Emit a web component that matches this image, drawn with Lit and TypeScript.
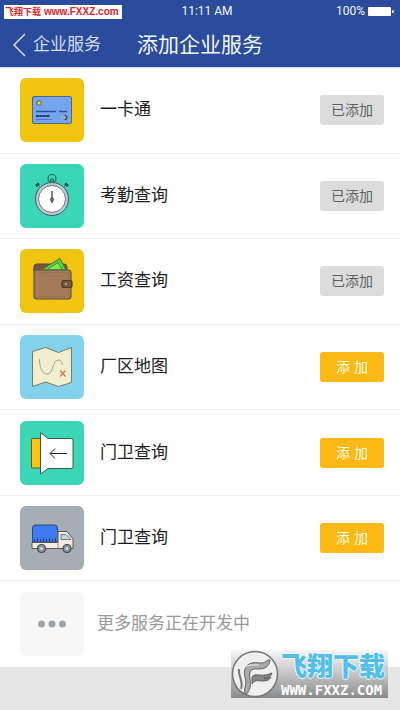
import { LitElement, html, css, svg, TemplateResult } from "lit";
import { customElement, property } from "lit/decorators.js";

interface Service {
  name: string;
  icon: string;
  added: boolean;
}

const SERVICES: Service[] = [
  { name: "一卡通", icon: "card", added: true },
  { name: "考勤查询", icon: "watch", added: true },
  { name: "工资查询", icon: "wallet", added: true },
  { name: "厂区地图", icon: "map", added: false },
  { name: "门卫查询", icon: "gate", added: false },
  { name: "门卫查询", icon: "truck", added: false },
];

const ICONS: Record<string, TemplateResult> = {
  card: svg`
    <rect x="12.5" y="18.5" width="39" height="27" rx="1.5" fill="#74a5ee" stroke="#52677c"/>
    <rect x="17" y="23" width="4" height="4" rx="1" fill="#f4d33c" stroke="#665f35"/>
    <path d="M16 33.5H36M39 33.5H47" stroke="#2b4f9e" stroke-width="1.5"/>
    <path d="M16 38H30" stroke="#22396c" stroke-width="2" stroke-dasharray="3 .4"/>
    <path d="M16 41.5H32" stroke="#4c74bd"/>
    <circle cx="42" cy="39.5" r="1" fill="#cdbf84"/>
    <path d="M44.5 37.5c3 0 3 4 0 4" stroke="#34456a" stroke-width="1.5" fill="#d9c98a"/>`,
  watch: svg`
    <circle cx="32" cy="14.5" r="4" fill="none" stroke="#25695d" stroke-width="1.2"/>
    <path d="M30.5 15h3v4h-3z" fill="#38a58f" stroke="#25695d"/>
    <path d="M16 22l3-2.500M45 19.5l3 2.500" stroke="#1d5249" stroke-width="2.5"/>
    <path d="M18 21l3 3M46 21l-3 3" stroke="#25695d"/>
    <circle cx="32" cy="35" r="16.5" fill="#bdcbd2" stroke="#46555d"/>
    <circle cx="32" cy="35" r="13.5" fill="#fff" stroke="#6b7880"/>
    <path d="M32 27v12" stroke="#333" stroke-width="1.2"/>
    <circle cx="32" cy="35.5" r="1.6" fill="#777" stroke="#333" stroke-width=".8"/>`,
  wallet: svg`
    <path d="M14 22v-4q0-3 3-3h27q3 0 3 3v5z" fill="#765640" stroke="#584632"/>
    <path d="M21 21l19-11.500 6 11.500z" fill="#5fd33c" stroke="#36782c"/>
    <path d="M28 20l10-6.500 4 6.500" fill="#7ee654" stroke="#3a8a2a"/>
    <path d="M14 19q0 2 3 2h31q3 0 3 3v23q0 3-3 3H17q-3 0-3-3z" fill="#a37b5b" stroke="#66503a" stroke-width="1.2"/>
    <path d="M17 23.5h30q1.5 0 1.5 1.5v21q0 1.5-1.5 1.5H17" fill="none" stroke="#8d6a4d" stroke-width=".7" stroke-dasharray="2 1"/>
    <rect x="42" y="31.5" width="10" height="7" rx="2" fill="#76563f" stroke="#4b3929" stroke-width="1.2"/>
    <circle cx="46" cy="35" r="1.3" fill="#b2977a"/>`,
  map: svg`
    <path d="M12.5 16.5L25.5 12.5 38.5 17.5 51.5 12.5V47.5L38.5 51.5 25.5 47 12.5 51.5z" fill="#f1efcf" stroke="#77796a"/>
    <path d="M19.5 24c0 9 3 15 7.5 15 7 0 5-14 11-14 2.500 0 4 2 4.5 5" fill="none" stroke="#a2a497"/>
    <path d="M40 35.5l5.5 6M45.5 35.5l-5.5 6" stroke="#d7705c" stroke-width="1.2"/>`,
  gate: svg`
    <rect x="11.5" y="17.5" width="12" height="29.5" rx="1" fill="#fdc60a" stroke="#5f5b2a"/>
    <path d="M20.5 11.5L28 17.5H51.5Q53 17.5 53 19V46Q53 47.5 51.5 47.5H28L20.5 53z" fill="#fff" stroke="#3a5752"/>
    <path d="M47 32.5H30.5M35 27.5l-5 5 5 5" fill="none" stroke="#222"/>`,
  truck: svg`
    <path d="M12.5 36V22q0-3 3-3h19q3 0 3 3v14z" fill="#3f7bf5" stroke="#2c4675"/>
    <path d="M14.5 36v-3M17.5 36v-4M20.5 36v-3M23.5 36v-4M26.5 36v-3M29.5 36v-4M32.5 36v-3M35.5 36v-4" stroke="#1f428f"/>
    <path d="M12 36.5H38V25.5H47L53 33V42.5H12z" fill="#f5ebe0" stroke="#5b5854"/>
    <path d="M41 28.5h5l5 5H41z" fill="#b9dbe8" stroke="#6a7074" stroke-width=".9"/>
    <path d="M38 26v16" stroke="#8f8981" stroke-width=".8"/>
    <circle cx="21.5" cy="42.5" r="4" fill="#8b939a" stroke="#3f464c" stroke-width="1.2"/>
    <circle cx="21.5" cy="42.5" r="1.3" fill="#e3e6e8"/>
    <circle cx="47" cy="42.5" r="4" fill="#8b939a" stroke="#3f464c" stroke-width="1.2"/>
    <circle cx="47" cy="42.5" r="1.3" fill="#e3e6e8"/>`,
  more: svg`
    <g fill="#9fa4a9"><circle cx="21.5" cy="32" r="3.5"/><circle cx="32" cy="32" r="3.5"/><circle cx="42.5" cy="32" r="3.5"/></g>`,
};

@customElement("service-icon")
class ServiceIcon extends LitElement {
  @property() name = "more";

  static styles = css`
    :host { display: block; flex: none; width: 64px; height: 64px; }
    .tile { display: block; width: 64px; height: 64px; border-radius: 6px; }
    .card, .wallet { background: #f0c511; }
    .watch, .gate { background: #3ad6b5; }
    .map { background: #82d2eb; }
    .truck { background: #a6adb4; }
    .more { background: #f7f7f7; }
  `;

  render() {
    return html`<svg class="tile ${this.name}" viewBox="0 0 64 64" aria-hidden="true">${ICONS[this.name]}</svg>`;
  }
}

@customElement("app-root")
class AppRoot extends LitElement {
  static styles = css`
    :host {
      display: flex;
      flex-direction: column;
      position: relative;
      min-height: 100vh;
      background: #e6e6e6;
      color: #1c1c1c;
      font-family: "Liberation Sans", "Noto Sans CJK SC", sans-serif;
    }
    .header { background: #2b4b9c; color: #f4f7ff; height: 68px; border-bottom: 1px solid #d9deeb; box-sizing: border-box; }
    .status {
      display: grid;
      grid-template-columns: 1fr auto 1fr;
      align-items: center;
      height: 22px;
      padding: 0 6px 0 20px;
      font: 12px Roboto, "Liberation Sans", sans-serif;
    }
    .time { grid-column: 2; }
    .power { display: flex; justify-content: flex-end; align-items: center; gap: 3px; }
    .battery { width: 26px; height: 9px; }
    .nav { display: grid; grid-template-columns: 1fr auto 1fr; align-items: center; height: 45px; }
    .back {
      display: flex;
      align-items: center;
      gap: 7px;
      padding: 0 0 0 12px;
      color: #d3ddf6;
      font-size: 17px;
      line-height: 24px;
      text-decoration: none;
    }
    .chevron { width: 14px; height: 24px; }
    .title { margin: 0; font-size: 21px; line-height: 30px; font-weight: 400; }
    .list {
      flex: 1;
      display: grid;
      grid-auto-rows: minmax(72px, 1fr);
      margin: 0;
      padding: 0;
      list-style: none;
      background: #fff;
    }
    .row { display: flex; align-items: center; gap: 16px; padding: 0 16px 0 20px; border-bottom: 1px solid #efefef; }
    .row:last-child { border-bottom: 0; gap: 13px; }
    .name { flex: 1; font-size: 17px; line-height: 24px; }
    .pending { color: #999; }
    .action {
      width: 64px;
      height: 30px;
      padding: 0;
      border: 0;
      border-radius: 3px;
      background: #fab914;
      color: #fffbe8;
      font: inherit;
      font-size: 14px;
      line-height: 30px;
    }
    .action:disabled { background: #dcdcdc; color: #606060; }
    .footer { height: 43px; }
    .site {
      position: absolute;
      left: 4px;
      top: 5px;
      display: flex;
      align-items: center;
      gap: 3px;
      height: 14px;
      padding: 0 3px 0 1px;
      background: #fff;
      color: #e0242c;
      font-size: 9px;
      line-height: 14px;
      font-weight: 700;
      white-space: nowrap;
    }
    .url { font-size: 10px; }
    .brand {
      position: absolute;
      right: 12px;
      bottom: 12px;
      display: flex;
      align-items: center;
      gap: 2px;
      width: 157px;
      height: 48px;
      background: linear-gradient(#f6f6f6, #c4c4c4 50%, #8a8a8a);
    }
    .emblem { flex: none; width: 48px; height: 48px; }
    .words { display: flex; flex-direction: column; }
    .cn {
      color: #55bde6;
      font-size: 26px;
      line-height: 32px;
      font-weight: 900;
      text-shadow: 1px 0 #e4f8ff, -1px 0 #e4f8ff, 0 1px #e4f8ff, 0 -1px #e4f8ff;
    }
    .en { font: 700 14px/14px "DejaVu Sans Mono", monospace; color: #fff; }
  `;

  render() {
    return html`
      <header class="header">
        <div class="status">
          <span class="time">11:11 AM</span>
          <span class="power">100%
            <svg class="battery" viewBox="0 0 26 9" aria-hidden="true">
              <rect width="23" height="9" rx="1" fill="#fff"/><path d="M24 3q2 0 2 1.5T24 6z" fill="#fff"/>
            </svg>
          </span>
        </div>
        <nav class="nav">
          <a class="back" href="#services">
            <svg class="chevron" viewBox="0 0 14 24" aria-hidden="true">
              <path d="M13 1L2 12l11 11" fill="none" stroke="#d3ddf6" stroke-width="1.5"/>
            </svg>企业服务</a>
          <h1 class="title">添加企业服务</h1>
        </nav>
      </header>
      <ul class="list">
        ${SERVICES.map(
          (s) => html`<li class="row">
            <service-icon name=${s.icon}></service-icon>
            <span class="name">${s.name}</span>
            <button class="action" type="button" ?disabled=${s.added}>${s.added ? "已添加" : "添 加"}</button>
          </li>`
        )}
        <li class="row">
          <service-icon name="more"></service-icon>
          <span class="name pending">更多服务正在开发中</span>
        </li>
      </ul>
      <footer class="footer"></footer>
      <div class="site"><span>飞翔下载</span><span class="url">www.FXXZ.com</span></div>
      <div class="brand">
        <svg class="emblem" viewBox="0 0 48 48" aria-hidden="true">
          <circle cx="24" cy="24" r="22.5" fill="#efefef" stroke="#747474" stroke-width="1.5"/>
          <path d="M8 19c-1 7 5 13 2 20" fill="none" stroke="#777" stroke-width="2"/>
          <path d="M15 45c-4-5 2-10-1-18-3-10 4-16 14-14 7 1 8-4 11-3-1 7-5 9-12 9-8-1-9 3-8 10 1 7 0 11-4 16z" fill="#a9a9a9" stroke="#606060"/>
          <path d="M21 27c3-5 10 1 20-4-1 4-4 5-8 5 3 1 5 0 7-1-2 4-6 4-9 4-4 0-6-2-10 3z" fill="#858585" stroke="#606060"/>
          <path d="M12 20c3-6 8-5 16-5" fill="none" stroke="#f5f5f5"/>
        </svg>
        <div class="words"><span class="cn">飞翔下载</span><span class="en">WWW.FXXZ.COM</span></div>
      </div>
    `;
  }
}
